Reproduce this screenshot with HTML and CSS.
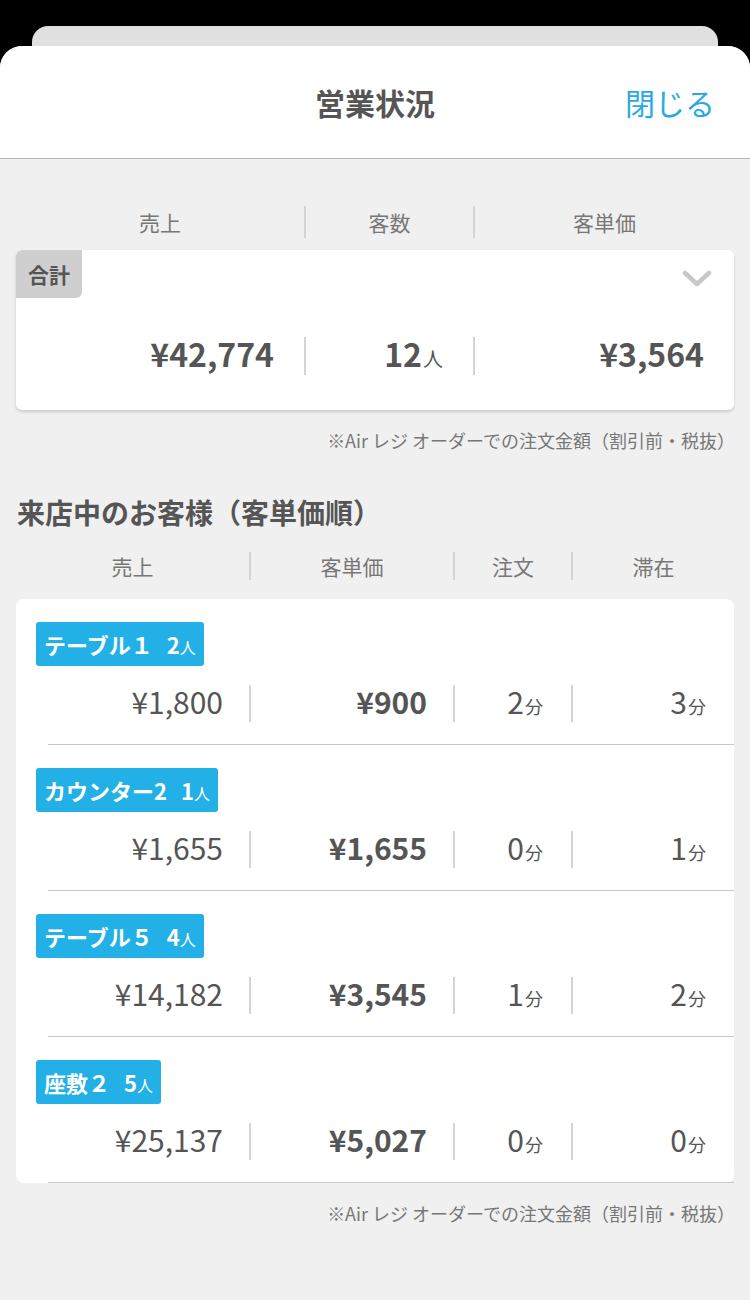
FILE: index.html
```html
<!DOCTYPE html>
<html lang="ja">
<head>
    <meta charset="UTF-8">
    <meta name="viewport" content="width=device-width, initial-scale=1.0">
    <title>営業状況</title>
    <link rel="stylesheet" href="styles.css">
</head>
<body>
    <div class="stack-back"></div>
    <div class="sheet">
        <div class="sheet-header">
            <div></div>
            <h1 class="title">営業状況</h1>
            <div class="close">閉じる</div>
        </div>

        <div class="summary-head">
            <div class="col">売上</div>
            <div class="col">客数</div>
            <div class="col">客単価</div>
        </div>
        <div class="summary-card">
            <div class="summary-top">
                <div class="total-tag">合計</div>
                <svg class="chevron" width="30" height="20" viewBox="0 0 30 20">
                    <polyline points="3,4 15,15 27,4" fill="none" stroke="#c8c8c8" stroke-width="4.5" stroke-linecap="round" stroke-linejoin="round"/>
                </svg>
            </div>
            <div class="summary-values">
                <div class="val">¥42,774</div>
                <div class="val">12<span class="unit">人</span></div>
                <div class="val">¥3,564</div>
            </div>
        </div>
        <div class="note">※Air レジ オーダーでの注文金額（割引前・税抜）</div>

        <h2 class="section-title">来店中のお客様（客単価順）</h2>
        <div class="list-head">
            <div class="col">売上</div>
            <div class="col">客単価</div>
            <div class="col">注文</div>
            <div class="col">滞在</div>
        </div>
        <div class="list-card" id="list"></div>
        <div class="note">※Air レジ オーダーでの注文金額（割引前・税抜）</div>
    </div>

    <script>
        const guests = [
            { name: 'テーブル１', people: 2, sales: '¥1,800', unit: '¥900', orders: 2, stay: 3 },
            { name: 'カウンター2', people: 1, sales: '¥1,655', unit: '¥1,655', orders: 0, stay: 1 },
            { name: 'テーブル５', people: 4, sales: '¥14,182', unit: '¥3,545', orders: 1, stay: 2 },
            { name: '座敷２', people: 5, sales: '¥25,137', unit: '¥5,027', orders: 0, stay: 0 }
        ];

        const list = document.getElementById('list');

        for (let g of guests) {
            const row = document.createElement('div');
            row.classList.add('guest-row');
            row.innerHTML = `
                <div class="guest-tag">${g.name}<span class="tag-people">${g.people}<span class="tag-unit">人</span></span></div>
                <div class="guest-values">
                    <div class="val">${g.sales}</div>
                    <div class="val strong">${g.unit}</div>
                    <div class="val">${g.orders}<span class="unit">分</span></div>
                    <div class="val">${g.stay}<span class="unit">分</span></div>
                </div>`;
            list.appendChild(row);
        }
    </script>
</body>
</html>
```

FILE: styles.css
```css
body {
    margin: 0;
    background: #000;
    font-family: "Noto Sans CJK JP", "Noto Sans", sans-serif;
    color: #555;
}

.stack-back {
    margin: 26px 32px 0;
    height: 20px;
    background: #e0e0e0;
    border-radius: 16px 16px 0 0;
}

.sheet {
    background: #f0f0f0;
    border-radius: 22px 22px 0 0;
    min-height: 1254px;
    overflow: hidden;
}

.sheet-header {
    height: 112px;
    background: #fff;
    border-bottom: 1px solid #b4b4b4;
    display: grid;
    grid-template-columns: 1fr auto 1fr;
    align-items: center;
}

.title {
    margin: 0;
    font-size: 30px;
    font-weight: bold;
    color: #555;
}

.close {
    justify-self: end;
    padding-right: 35px;
    font-size: 30px;
    color: #2aaae2;
}

.summary-head,
.summary-values {
    display: grid;
    grid-template-columns: 288px 169px 1fr;
}

.summary-head {
    margin: 47px 16px 12px;
}

.list-head,
.guest-values {
    display: grid;
    grid-template-columns: 233px 204px 118px 1fr;
}

.list-head {
    margin: 20px 16px 19px;
}

.col {
    text-align: center;
    font-size: 21px;
    line-height: 32px;
    color: #777;
}

.list-head .col {
    line-height: 28px;
}

.col + .col,
.val + .val {
    border-left: 2px solid #d4d4d4;
}

.summary-card {
    margin: 0 16px;
    height: 160px;
    background: #fff;
    border-radius: 6px;
    box-shadow: 0 2px 3px rgba(0, 0, 0, 0.15);
}

.summary-top {
    display: flex;
    justify-content: space-between;
    align-items: flex-start;
    height: 48px;
}

.total-tag {
    width: 66px;
    height: 48px;
    line-height: 48px;
    text-align: center;
    background: #cfcfcf;
    border-radius: 6px 0 6px 0;
    font-size: 21px;
    font-weight: bold;
    color: #555;
}

.chevron {
    margin: 19px 22px 0 0;
}

.summary-values {
    margin-top: 39px;
}

.summary-values .val {
    text-align: right;
    padding-right: 30px;
    font-size: 32px;
    font-weight: bold;
    line-height: 33px;
}

.unit {
    font-size: 18px;
    font-weight: normal;
    margin-left: 1px;
}

.summary-values .unit {
    font-size: 20px;
}

.note {
    text-align: right;
    padding-right: 15px;
    margin-top: 18px;
    font-size: 18px;
    line-height: 24px;
    color: #777;
}

.section-title {
    margin: 40px 0 0 17px;
    font-size: 28px;
    line-height: 40px;
    font-weight: bold;
    color: #555;
}

.list-card {
    margin: 0 16px;
    background: #fff;
    border-radius: 8px;
}

.guest-row {
    display: flex;
    flex-direction: column;
    align-items: flex-start;
    height: 146px;
    box-sizing: border-box;
    padding-top: 23px;
    border-bottom: 1px solid #c8c8c8;
    margin-left: 32px;
}

.guest-row .guest-tag {
    margin-left: -12px;
}

.guest-tag {
    height: 44px;
    line-height: 44px;
    padding: 0 8px;
    background: #22b0e6;
    border-radius: 3px;
    color: #fff;
    font-size: 22px;
    font-weight: bold;
}

.tag-people {
    margin-left: 14px;
}

.tag-unit {
    font-size: 16px;
    font-weight: normal;
}

.guest-values {
    align-self: stretch;
    margin: 19px 0 0 -32px;
}

.guest-values .val {
    text-align: right;
    padding-right: 26px;
    font-size: 30px;
    line-height: 32px;
}

.guest-values .val:nth-child(n+3) {
    padding-right: 28px;
}

.guest-values .strong {
    font-weight: bold;
}
```
